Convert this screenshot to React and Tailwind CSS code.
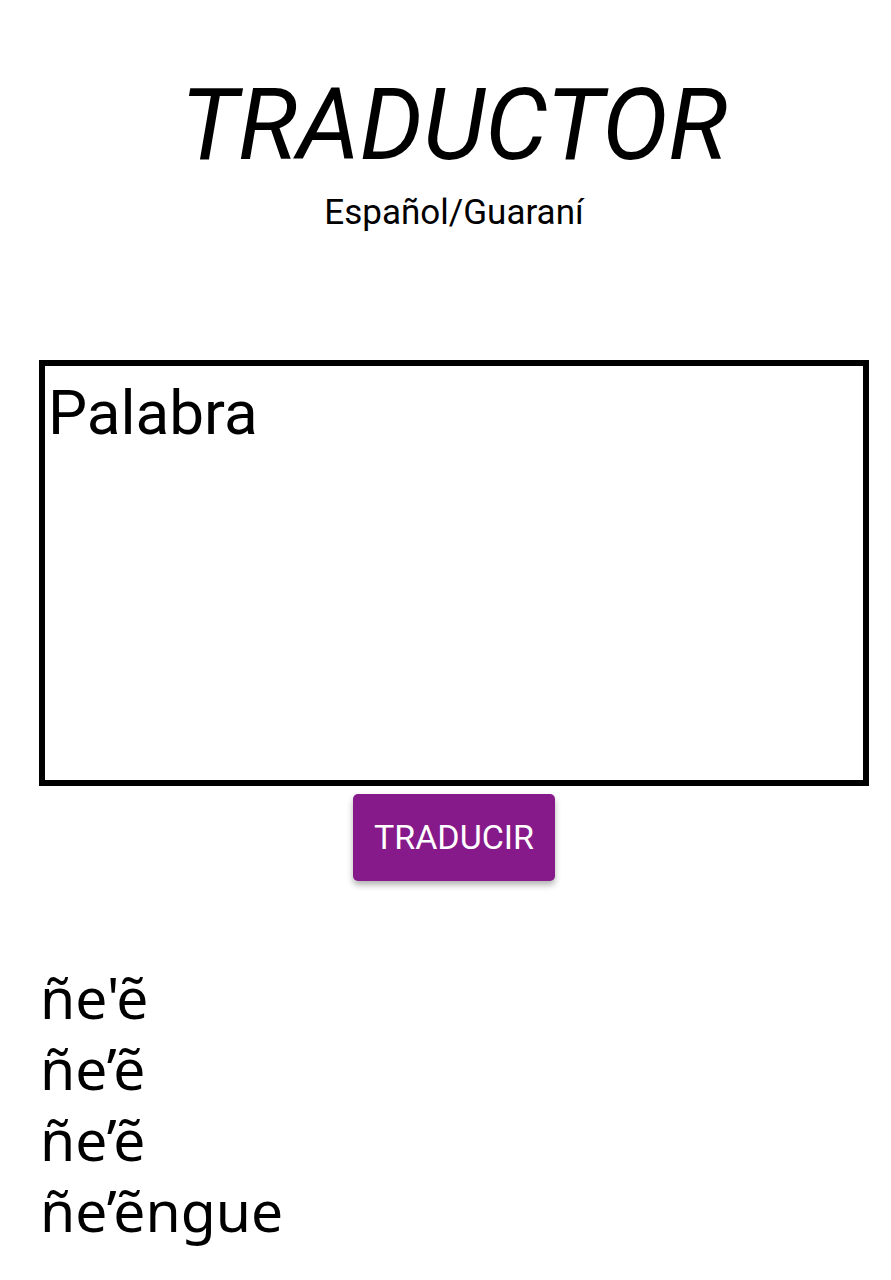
export default function App() {
  const results = ["ñe'ẽ", "ñe’ẽ", "ñe’ẽ", "ñe’ẽngue"];
  return (
    <div className="w-[891px] min-h-[1280px] bg-white text-black font-['Roboto',sans-serif]">
      <div className="ml-[39px] w-[830px]">
        <div className="pt-[65px] flex flex-col items-center">
          <h1 className="italic text-[99px] leading-[120px]">TRADUCTOR</h1>
          <p className="text-[35px] leading-[40px] mt-[8px]">Español/Guaraní</p>
        </div>

        <div className="mt-[127px] h-[426px] border-[6px] border-black px-[3px]">
          <div className="text-[62px] leading-[94px]">Palabra</div>
        </div>

        <div className="flex justify-center mt-[8px]">
          <button className="w-[202px] h-[87px] rounded-[5px] bg-[#861a8a] text-white text-[34px] shadow-[0_4px_6px_rgba(0,0,0,0.3)]">
            TRADUCIR
          </button>
        </div>
      </div>

      <div className="mt-[81px] pl-[40px] font-['Noto_Sans',sans-serif] text-[57px] leading-[71px]">
        {results.map((r, i) => (
          <div key={i}>{r}</div>
        ))}
      </div>
    </div>
  );
}
